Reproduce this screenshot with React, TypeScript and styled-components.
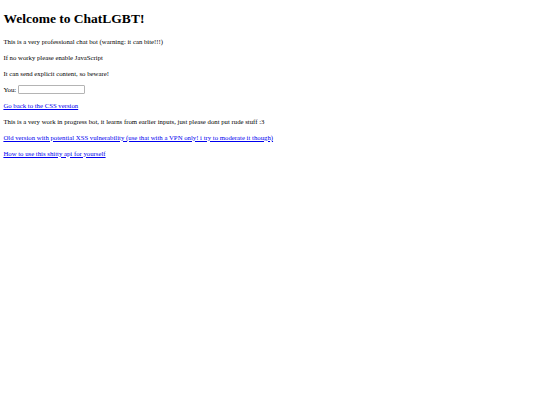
import * as React from "react";
import styled, { createGlobalStyle } from "styled-components";

// the reference is a plain default page shown at ~0.42 scale
const GlobalStyle = createGlobalStyle`
  html, body {
    margin: 0;
    padding: 0;
    background: #ffffff;
  }
  body {
    margin: 3.4px;
    font-family: "Liberation Serif", "Times New Roman", serif;
    font-size: 6.75px;
    line-height: 1.37;
    color: #000000;
  }
`;

const Page = styled.div`
  display: block;
`;

const Title = styled.h1`
  font-size: 13.5px;
  font-weight: bold;
  margin: 7px 0 8px;
  line-height: 1.37;
`;

const Para = styled.p`
  margin: 6.75px 0;
`;

const Link = styled.a`
  color: #0000ee;
  text-decoration: underline;
  cursor: pointer;
  &:visited {
    color: #0000ee;
  }
`;

const ChatRow = styled.div`
  display: flex;
  align-items: center;
  height: 9.25px;
  margin: 6.75px 0;
`;

const ChatInput = styled.input`
  box-sizing: border-box;
  width: 67px;
  height: 9px;
  margin: 0 0 0 1.5px;
  padding: 0 1px;
  border: 1px solid #b4b4b4;
  border-radius: 1px;
  font-size: 5.6px;
  font-family: "Liberation Sans", Arial, sans-serif;
  background: #ffffff;
  outline: none;
`;

export default function App() {
  return (
    <Page>
      <GlobalStyle />
      <Title>Welcome to ChatLGBT!</Title>
      <Para>This is a very professional chat bot (warning: it can bite!!!)</Para>
      <Para>If no worky please enable JavaScript</Para>
      <Para>It can send explicit content, so beware!</Para>
      <ChatRow>
        <span>You:</span>
        <ChatInput type="text" />
      </ChatRow>
      <Para>
        <Link href="#css">Go back to the CSS version</Link>
      </Para>
      <Para>
        This is a very work in progress bot, it learns from earlier inputs, just please dont put rude stuff :3
      </Para>
      <Para>
        <Link href="#old">
          Old version with potential XSS vulnerability (use that with a VPN only! i try to moderate it though)
        </Link>
      </Para>
      <Para>
        <Link href="#api">How to use this shitty api for yourself</Link>
      </Para>
    </Page>
  );
}
